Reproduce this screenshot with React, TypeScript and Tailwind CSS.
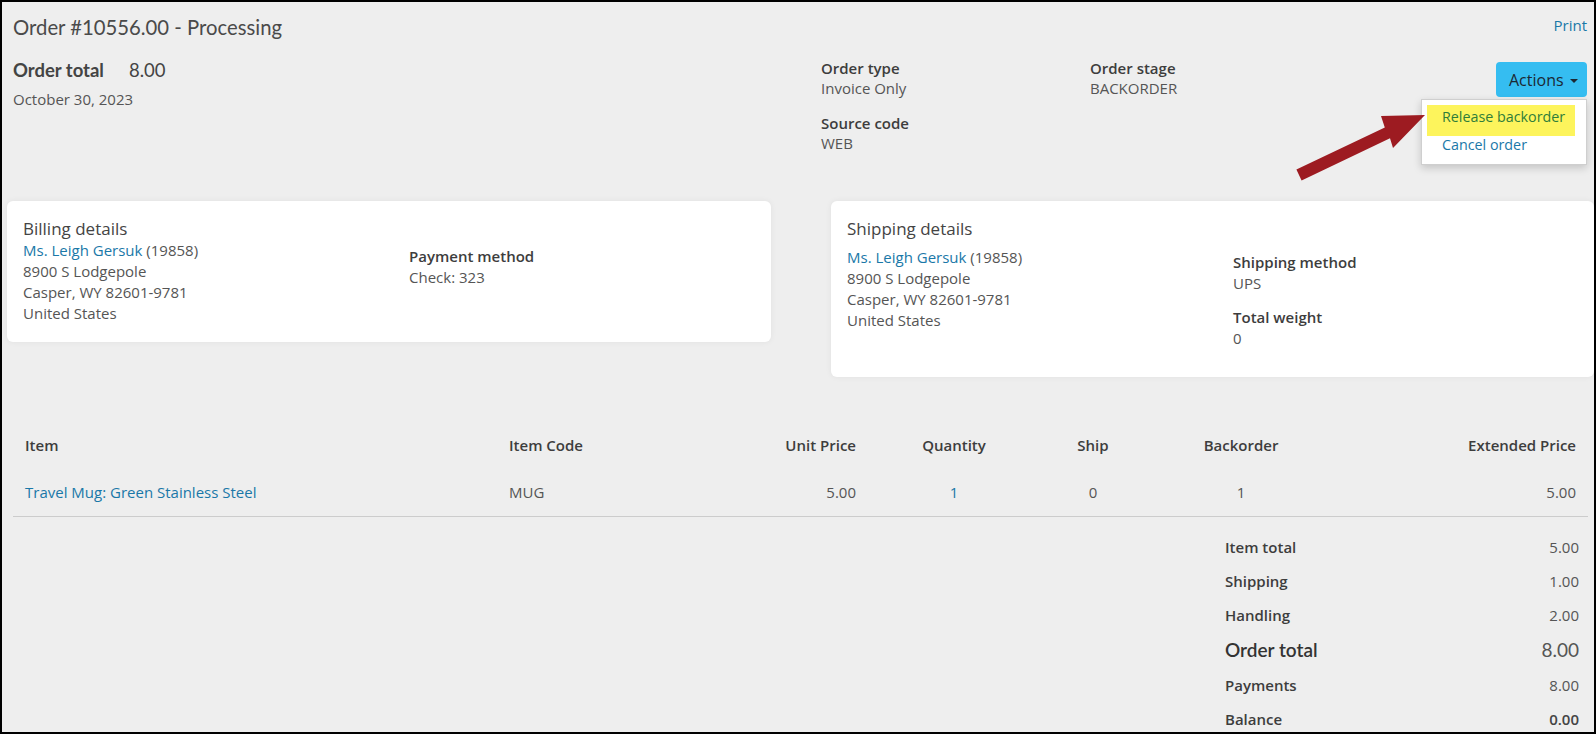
import React from 'react'

const link = 'text-[#1a78a8]'

function Detail({ label, value }: { label: string; value: string }) {
  return (
    <div>
      <div className="font-semibold leading-[21px] text-[#3d3d3d]">{label}</div>
      <div className="leading-[21px]">{value}</div>
    </div>
  )
}

function TotalRow({ label, value, big, bold }: { label: string; value: string; big?: boolean; bold?: boolean }) {
  if (big) {
    return (
      <div className="flex justify-between font-['Lato',sans-serif] text-[19px] leading-[36px]">
        <span className="font-semibold text-[#333]">{label}</span>
        <span className="text-[#555]">{value}</span>
      </div>
    )
  }
  return (
    <div className="flex justify-between leading-[34px]">
      <span className="font-semibold text-[#3d3d3d]">{label}</span>
      <span className={bold ? 'font-semibold text-[#444]' : 'text-[#555]'}>{value}</span>
    </div>
  )
}

export default function App() {
  return (
    <div className="relative h-[734px] w-[1596px] overflow-hidden border-2 border-black bg-[#eeeeee] font-['Open_Sans',sans-serif] text-[15px] text-[#555]">
      {/* Header */}
      <div className="pl-[11px] pr-[7px] pt-[11px]">
        <div className="flex items-start justify-between">
          <h1 className="font-['Lato',sans-serif] text-[20.3px] leading-[28px] text-[#4a4a4a]">
            Order #10556.00 - Processing
          </h1>
          <a className={`mt-[1.5px] leading-[20px] ${link}`}>Print</a>
        </div>

        <div className="mt-[17px] flex items-start">
          <div className="w-[808px]">
            <div className="flex font-['Lato',sans-serif] text-[18.5px] leading-[24px] text-[#444]">
              <span className="w-[116px] font-bold">Order total</span>
              <span>8.00</span>
            </div>
            <div className="mt-[7px] leading-[20px]">October 30, 2023</div>
          </div>

          <div className="w-[269px] leading-[20px]">
            <div className="font-semibold text-[#3d3d3d]">Order type</div>
            <div>Invoice Only</div>
            <div className="mt-[15px] font-semibold text-[#3d3d3d]">Source code</div>
            <div>WEB</div>
          </div>

          <div className="flex-1 leading-[20px]">
            <div className="font-semibold text-[#3d3d3d]">Order stage</div>
            <div>BACKORDER</div>
          </div>

          <div className="relative mt-[4px]">
            <button className="flex h-[35px] w-[91px] items-center rounded-[4px] bg-[#35bdf1] pl-[13px] text-[16px] text-[#1c2833]">
              Actions
              <span className="ml-[6px] mt-[2px] h-0 w-0 border-l-[4px] border-r-[4px] border-t-[4px] border-l-transparent border-r-transparent border-t-[#1c2833]" />
            </button>
            <div className="absolute right-0 top-[37px] z-10 h-[66px] w-[166px] border border-[#cfcfcf] bg-white pt-[5px] text-[14px] shadow-[0_3px_8px_rgba(0,0,0,0.18)]">
              <div className="ml-[5px] h-[31px] w-[148px] bg-[#fdf45c] pl-[15px] pt-[2px] text-[14.3px] leading-[20px] text-[#2f7d3a]">
                Release backorder
              </div>
              <div className={`-mt-[1px] pl-[20px] text-[14.3px] leading-[20px] ${link}`}>Cancel order</div>
            </div>
          </div>
        </div>
      </div>

      {/* Address cards */}
      <div className="mt-[48px] flex items-start gap-[60px] pl-[5px]">
        <div className="flex w-[764px] shrink-0 rounded-[6px] bg-white pb-[18px] pl-[16px] pt-[16.5px] shadow-[0_0_6px_rgba(0,0,0,0.06)]">
          <div className="w-[386px]">
            <div className="text-[17px] leading-[22px] text-[#444]">Billing details</div>
            <div className="leading-[21px]">
              <div>
                <a className={link}>Ms. Leigh Gersuk</a> (19858)
              </div>
              <div>8900 S Lodgepole</div>
              <div>Casper, WY 82601-9781</div>
              <div>United States</div>
            </div>
          </div>
          <div className="mt-[28px]">
            <Detail label="Payment method" value="Check: 323" />
          </div>
        </div>

        <div className="flex w-[763px] shrink-0 rounded-[6px] bg-white pb-[28.5px] pl-[16px] pt-[16.5px] shadow-[0_0_6px_rgba(0,0,0,0.06)]">
          <div className="w-[386px]">
            <div className="text-[17px] leading-[22px] text-[#444]">Shipping details</div>
            <div className="mt-[7px] leading-[21px]">
              <div>
                <a className={link}>Ms. Leigh Gersuk</a> (19858)
              </div>
              <div>8900 S Lodgepole</div>
              <div>Casper, WY 82601-9781</div>
              <div>United States</div>
            </div>
          </div>
          <div className="mt-[34px] flex flex-col gap-[13px]">
            <Detail label="Shipping method" value="UPS" />
            <Detail label="Total weight" value="0" />
          </div>
        </div>
      </div>

      {/* Items table */}
      <div className="mt-[47.5px] pl-[11px]">
        <table className="w-[1575px] table-fixed border-collapse leading-[21px]">
          <colgroup>
            <col className="w-[484px]" />
            <col className="w-[251px]" />
            <col className="w-[120px]" />
            <col className="w-[172px]" />
            <col className="w-[106px]" />
            <col className="w-[190px]" />
            <col className="w-[252px]" />
          </colgroup>
          <thead>
            <tr className="font-semibold text-[#3d3d3d]">
              <th className="px-[12px] pb-[14px] pt-[10px] text-left font-semibold">Item</th>
              <th className="px-[12px] pb-[14px] pt-[10px] text-left font-semibold">Item Code</th>
              <th className="px-[12px] pb-[14px] pt-[10px] text-right font-semibold">Unit Price</th>
              <th className="px-[12px] pb-[14px] pt-[10px] text-center font-semibold">Quantity</th>
              <th className="px-[12px] pb-[14px] pt-[10px] text-center font-semibold">Ship</th>
              <th className="px-[12px] pb-[14px] pt-[10px] text-center font-semibold">Backorder</th>
              <th className="px-[12px] pb-[14px] pt-[10px] text-right font-semibold">Extended Price</th>
            </tr>
          </thead>
          <tbody>
            <tr className="border-b border-[#cccccc]">
              <td className="px-[12px] pb-[13px] pt-[12px]">
                <a className={link}>Travel Mug: Green Stainless Steel</a>
              </td>
              <td className="px-[12px] pb-[13px] pt-[12px]">MUG</td>
              <td className="px-[12px] pb-[13px] pt-[12px] text-right">5.00</td>
              <td className={`px-[12px] pb-[13px] pt-[12px] text-center ${link}`}>1</td>
              <td className="px-[12px] pb-[13px] pt-[12px] text-center">0</td>
              <td className="px-[12px] pb-[13px] pt-[12px] text-center">1</td>
              <td className="px-[12px] pb-[13px] pt-[12px] text-right">5.00</td>
            </tr>
          </tbody>
        </table>
      </div>

      {/* Totals */}
      <div className="ml-auto mr-[15px] mt-[13px] w-[354px]">
        <TotalRow label="Item total" value="5.00" />
        <TotalRow label="Shipping" value="1.00" />
        <TotalRow label="Handling" value="2.00" />
        <TotalRow label="Order total" value="8.00" big />
        <TotalRow label="Payments" value="8.00" />
        <TotalRow label="Balance" value="0.00" bold />
      </div>

      {/* Annotation arrow */}
      <svg
        className="pointer-events-none absolute left-[1288px] top-[108px] z-20"
        width="140"
        height="76"
        viewBox="0 0 140 76"
      >
        <polygon
          points="6.4,59.6 94.8,17.5 91,6 135,5 103,38 100,28.3 11.6,70.4"
          fill="#9d1b21"
        />
      </svg>
    </div>
  )
}
